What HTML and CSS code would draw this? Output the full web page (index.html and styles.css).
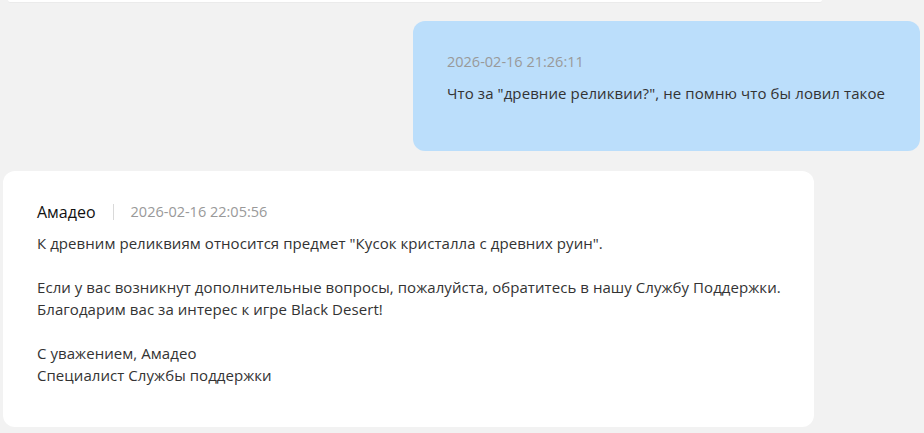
FILE: index.html
```html
<!DOCTYPE html>
<html lang="ru">
<head>
<meta charset="utf-8">
<link rel="stylesheet" href="styles.css">
</head>
<body>
<div class="prev-card"></div>
<div class="row row-user">
  <div class="bubble">
    <div class="time time-user">2026-02-16 21:26:11</div>
    <div class="text text-user">Что за "древние реликвии?", не помню что бы ловил такое</div>
  </div>
</div>
<div class="row row-agent">
  <div class="card">
    <div class="head">
      <span class="name">Амадео</span>
      <span class="sep"></span>
      <span class="time">2026-02-16 22:05:56</span>
    </div>
    <div class="text text-agent">К древним реликвиям относится предмет "Кусок кристалла с древних руин".<br><br>Если у вас возникнут дополнительные вопросы, пожалуйста, обратитесь в нашу Службу Поддержки.<br>Благодарим вас за интерес к игре Black Desert!<br><br>С уважением, Амадео<br>Специалист Службы поддержки</div>
  </div>
</div>
</body>
</html>
```
FILE: styles.css
```css
html, body {
  margin: 0;
  padding: 0;
  background: #f2f2f2;
  font-family: "Open Sans", "Noto Sans", sans-serif;
  font-size: 15px;
  line-height: 22px;
  color: #333;
}
.prev-card {
  height: 2px;
  margin: 0 102px 0 8px;
  background: #fff;
  border-radius: 0 0 2px 2px;
  box-shadow: 0 1px 1px rgba(0,0,0,0.03);
}
.row {
  display: flex;
}
.row-user {
  justify-content: flex-end;
  padding: 19px 4px 0 0;
}
.bubble {
  width: 507px;
  box-sizing: border-box;
  background: #bbdefb;
  border-radius: 12px;
  padding: 30px 20px 47px 34px;
}
.text-user {
  letter-spacing: 0.1px;
}
.text-agent {
  letter-spacing: 0.06px;
}
.time {
  color: #999;
  font-size: 14.5px;
}
.time-user {
  margin-bottom: 9px;
}
.row-agent {
  padding: 20px 0 0 3px;
}
.card {
  width: 811px;
  box-sizing: border-box;
  background: #fff;
  border-radius: 12px;
  padding: 30px 20px 41px 34px;
}
.head {
  display: flex;
  align-items: center;
  margin-bottom: 9px;
}
.name {
  color: #111;
  font-size: 16px;
}
.sep {
  width: 1px;
  height: 16px;
  background: #d9d9d9;
  margin: 0 17px;
}
```
